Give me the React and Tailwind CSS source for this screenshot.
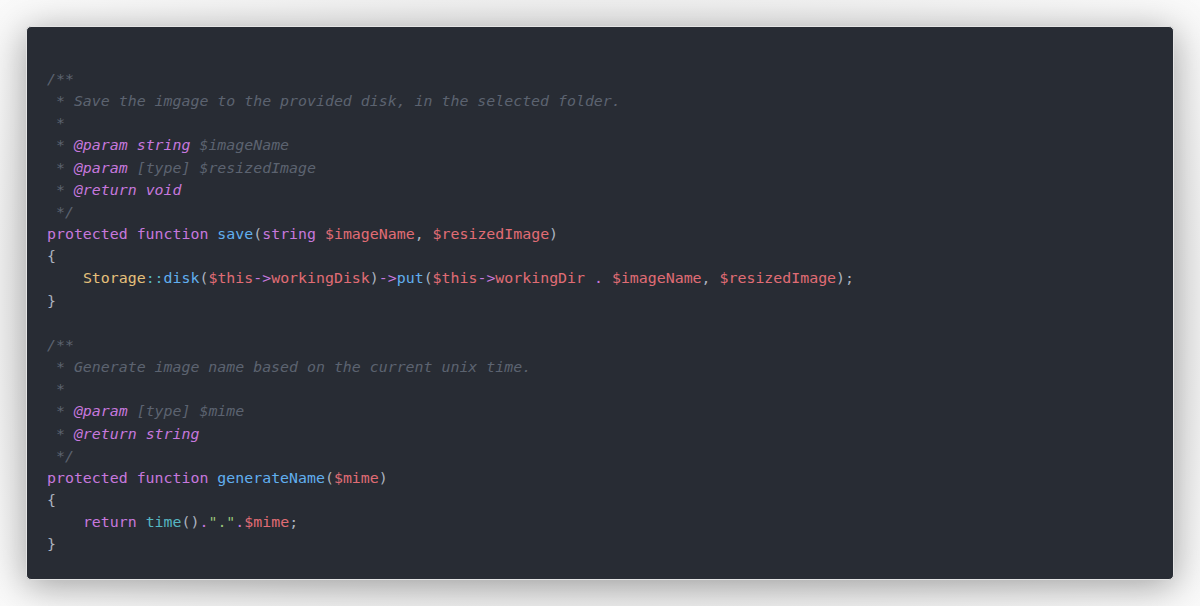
import React from 'react';

const C = {
  comment: 'text-[#5c6370] italic',
  tag: 'text-[#c678dd] italic',
  tagType: 'text-[#c678dd] italic',
  kw: 'text-[#c678dd]',
  fn: 'text-[#61afef]',
  v: 'text-[#e06c75]',
  cls: 'text-[#e5c07b]',
  op: 'text-[#56b6c2]',
  builtin: 'text-[#56b6c2]',
  str: 'text-[#98c379]',
  punc: 'text-[#abb2bf]',
};

// each line is a list of [className, text]
const lines = [
  [[C.comment, '/**']],
  [[C.comment, ' * Save the imgage to the provided disk, in the selected folder.']],
  [[C.comment, ' *']],
  [[C.comment, ' * '], [C.tag, '@param'], [C.comment, ' '], [C.tagType, 'string'], [C.comment, ' $imageName']],
  [[C.comment, ' * '], [C.tag, '@param'], [C.comment, ' [type] $resizedImage']],
  [[C.comment, ' * '], [C.tag, '@return'], [C.comment, ' '], [C.tagType, 'void']],
  [[C.comment, ' */']],
  [
    [C.kw, 'protected'], [C.punc, ' '], [C.kw, 'function'], [C.punc, ' '], [C.fn, 'save'], [C.punc, '('],
    [C.kw, 'string'], [C.punc, ' '], [C.v, '$imageName'], [C.punc, ', '], [C.v, '$resizedImage'], [C.punc, ')'],
  ],
  [[C.punc, '{']],
  [
    [C.punc, '    '], [C.cls, 'Storage'], [C.op, '::'], [C.fn, 'disk'], [C.punc, '('], [C.v, '$this'],
    [C.kw, '->'], [C.v, 'workingDisk'], [C.punc, ')'], [C.kw, '->'], [C.fn, 'put'], [C.punc, '('],
    [C.v, '$this'], [C.kw, '->'], [C.v, 'workingDir'], [C.punc, ' '], [C.kw, '.'], [C.punc, ' '],
    [C.v, '$imageName'], [C.punc, ', '], [C.v, '$resizedImage'], [C.punc, ');'],
  ],
  [[C.punc, '}']],
  [[C.punc, ' ']],
  [[C.comment, '/**']],
  [[C.comment, ' * Generate image name based on the current unix time.']],
  [[C.comment, ' *']],
  [[C.comment, ' * '], [C.tag, '@param'], [C.comment, ' [type] $mime']],
  [[C.comment, ' * '], [C.tag, '@return'], [C.comment, ' '], [C.tagType, 'string']],
  [[C.comment, ' */']],
  [
    [C.kw, 'protected'], [C.punc, ' '], [C.kw, 'function'], [C.punc, ' '], [C.fn, 'generateName'],
    [C.punc, '('], [C.v, '$mime'], [C.punc, ')'],
  ],
  [[C.punc, '{']],
  [
    [C.punc, '    '], [C.kw, 'return'], [C.punc, ' '], [C.builtin, 'time'], [C.punc, '()'], [C.kw, '.'],
    [C.str, '"."'], [C.kw, '.'], [C.v, '$mime'], [C.punc, ';'],
  ],
  [[C.punc, '}']],
];

export default function App() {
  return (
    <div className="w-[1200px] h-[606px] bg-[radial-gradient(ellipse_at_center,#d6d6d6_0%,#ebebeb_60%,#fafafa_100%)] pt-[26px] px-[26px] overflow-hidden">
      <div className="w-[1148px] h-[554px] bg-[#282c34] rounded-[5px] border border-[#e4e4e4] shadow-[0_6px_36px_rgba(0,0,0,0.35)] pt-[41px] pl-[20px]">
        <pre className="font-['DejaVu_Sans_Mono',monospace] text-[14.9px] leading-[22.15px] text-[#abb2bf] m-0">
          {lines.map((line, i) => (
            <div key={i} className="whitespace-pre">
              {line.map(([cls, txt], j) => (
                <span key={j} className={cls}>{txt}</span>
              ))}
            </div>
          ))}
        </pre>
      </div>
    </div>
  );
}
